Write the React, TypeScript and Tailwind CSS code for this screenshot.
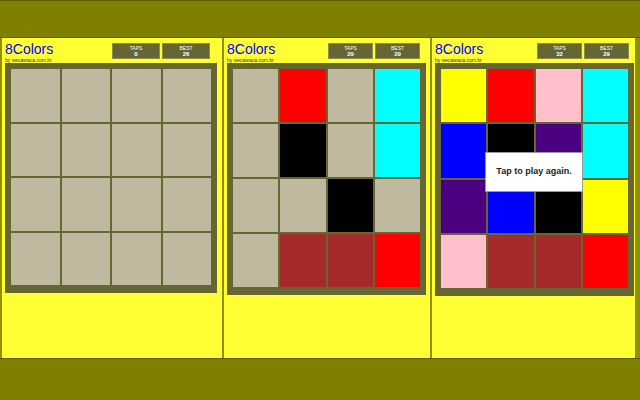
const B = "#c0b9a0";
const R = "#ff0000";
const C = "#00ffff";
const K = "#000000";
const BR = "#a52a2a";
const Y = "#ffff00";
const P = "#ffc0cb";
const BL = "#0000ff";
const IN = "#4b0082";

type PanelProps = {
  width: string;
  boardWidth: string;
  boardHeight: string;
  boxWidth: string;
  headerRight: string;
  taps: string;
  best: string;
  tiles: string[];
  overlay?: boolean;
};

function Stat({ label, value, w }: { label: string; value: string; w: string }) {
  return (
    <div
      className={`${w} h-[16px] bg-[#666633] border border-[#8c8c4d] flex flex-col items-center justify-center leading-none text-white`}
    >
      <span className="text-[5px] leading-[6px]">{label}</span>
      <span className="text-[6px] leading-[7px] font-bold">{value}</span>
    </div>
  );
}

function Panel({ width, boardWidth, boardHeight, boxWidth, headerRight, taps, best, tiles, overlay }: PanelProps) {
  return (
    <div className={`${width} bg-[#ffff33] flex flex-col`}>
      <div className={`h-[25px] flex items-start justify-between pl-[3px] ${headerRight}`}>
        <div className="pt-[4px]">
          <div className="text-[14px] leading-[14px] text-[#0000ff]">8Colors</div>
          <div className="text-[5px] leading-[6px] text-[#333366] mt-[1px]">by wecawaca.com.br</div>
        </div>
        <div className="flex gap-[2px] pt-[5px]">
          <Stat label="TAPS" value={taps} w={boxWidth} />
          <Stat label="BEST" value={best} w={boxWidth} />
        </div>
      </div>
      <div className={`relative ml-[3px] ${boardWidth} ${boardHeight} bg-[#666633] pt-[6px] pl-[6px] pr-[6px] pb-[8px]`}>
        <div className="grid grid-cols-4 grid-rows-4 gap-[2px] h-full">
          {tiles.map((c, i) => (
            <div key={i} style={{ backgroundColor: c }} />
          ))}
        </div>
        {overlay && (
          <div className="absolute left-[50px] top-[89px] w-[98px] h-[40px] bg-white border border-[#9a9a9a] flex items-center justify-center">
            <span className="text-[9px] font-bold text-[#222]">Tap to play again.</span>
          </div>
        )}
      </div>
    </div>
  );
}

export default function App() {
  const p1 = Array(16).fill(B);
  const p2 = [B, R, B, C, B, K, B, C, B, B, K, B, B, BR, BR, R];
  const p3 = [Y, R, P, C, BL, K, IN, C, IN, BL, K, Y, P, BR, BR, R];
  return (
    <div
      className="w-[640px] h-[400px] bg-[#808000] flex flex-col overflow-hidden"
      style={{ fontFamily: '"Liberation Sans", Arial, sans-serif' }}
    >
      <div className="h-[38px] border-t border-b border-[#5c5c00] bg-[#808000]" />
      <div className="h-[320px] flex gap-[2px] pl-[2px] bg-[#8f8f00]">
        <Panel
          width="w-[220px]"
          boardWidth="w-[212px]"
          boardHeight="h-[230px]"
          boxWidth="w-[48px]"
          headerRight="pr-[12px]"
          taps="0"
          best="26"
          tiles={p1}
        />
        <Panel
          width="w-[206px]"
          boardWidth="w-[199px]"
          boardHeight="h-[232px]"
          boxWidth="w-[45px]"
          headerRight="pr-[10px]"
          taps="29"
          best="29"
          tiles={p2}
        />
        <Panel
          width="w-[203px]"
          boardWidth="w-[199px]"
          boardHeight="h-[233px]"
          boxWidth="w-[45px]"
          headerRight="pr-[6px]"
          taps="32"
          best="29"
          tiles={p3}
          overlay
        />
      </div>
      <div className="flex-1 border-t border-[#5c5c00] bg-[#808000]" />
    </div>
  );
}
